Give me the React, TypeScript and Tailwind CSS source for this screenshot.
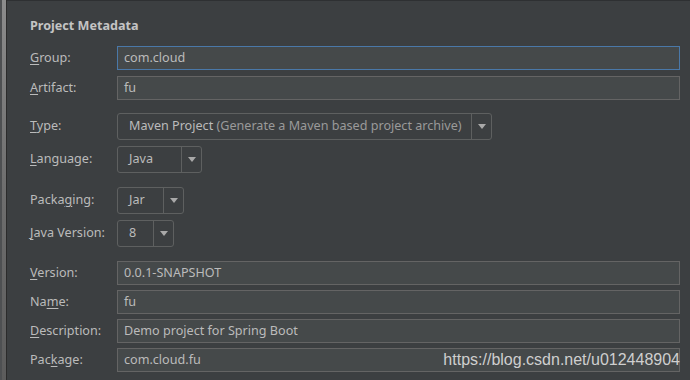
import React from "react";

const Arrow = () => (
  <svg width="8" height="5" viewBox="0 0 8 5">
    <path d="M0 0 L8 0 L4 5 Z" fill="#a9a9a9" />
  </svg>
);

function Label({ pre, m, post }: { pre: string; m: string; post: string }) {
  return (
    <div className="w-[87px] shrink-0 text-[#bbbbbb]">
      {pre}
      <span className="underline underline-offset-[2px] decoration-[1px]">{m}</span>
      {post}
    </div>
  );
}

function TextRow({
  label,
  value,
  focused,
  mt,
}: {
  label: [string, string, string];
  value: string;
  focused?: boolean;
  mt: string;
}) {
  return (
    <div className={`flex items-center ${mt}`}>
      <Label pre={label[0]} m={label[1]} post={label[2]} />
      <div
        className={`w-[563px] h-[24px] flex items-center pl-[6px] bg-[#45494a] border text-[#bbbbbb] ${
          focused ? "border-[#4a78a8]" : "border-[#646464]"
        }`}
      >
        {value}
      </div>
    </div>
  );
}

function ComboRow({
  label,
  children,
  width,
  mt,
}: {
  label: [string, string, string];
  children: React.ReactNode;
  width: string;
  mt: string;
}) {
  return (
    <div className={`flex items-center ${mt}`}>
      <Label pre={label[0]} m={label[1]} post={label[2]} />
      <div className={`${width} h-[27px] flex rounded-[3px] border border-[#5e6060] bg-[#3c3f41]`}>
        <div className="flex-1 flex items-center pl-[11px] text-[#bbbbbb] whitespace-nowrap overflow-hidden">
          {children}
        </div>
        <div className="w-[20px] border-l border-[#5e6060] flex items-center justify-center">
          <Arrow />
        </div>
      </div>
    </div>
  );
}

export default function App() {
  return (
    <div
      className="w-[690px] h-[380px] bg-[#3c3f41] flex overflow-hidden relative text-[12.6px]"
      style={{ fontFamily: '"Noto Sans", "Open Sans", sans-serif' }}
    >
      <div className="w-[7px] shrink-0 flex">
        <div className="w-[2px] bg-[#4e5052]" />
        <div className="w-[4px] bg-gradient-to-b from-[#8c8c8c] via-[#6e6e6e] to-[#5c5c5c]" />
        <div className="w-[1px] bg-[#2b2b2b]" />
      </div>
      <div className="flex-1 flex flex-col border-t border-[#2e3032] pl-[23px]">
        <div className="mt-[17px] h-[16px] leading-[16px] font-bold text-[#c4c4c4]">Project Metadata</div>
        <TextRow label={["", "G", "roup:"]} value="com.cloud" focused mt="mt-[12px]" />
        <TextRow label={["", "A", "rtifact:"]} value="fu" mt="mt-[6px]" />
        <ComboRow label={["", "T", "ype:"]} width="w-[375px]" mt="mt-[13px]">
          <span>Maven Project</span>
          <span className="text-[#9a9a9a]">&nbsp;(Generate a Maven based project archive)</span>
        </ComboRow>
        <ComboRow label={["", "L", "anguage:"]} width="w-[85px]" mt="mt-[6px]">
          Java
        </ComboRow>
        <ComboRow label={["Packa", "g", "ing:"]} width="w-[67px]" mt="mt-[14px]">
          Jar
        </ComboRow>
        <ComboRow label={["", "J", "ava Version:"]} width="w-[57px]" mt="mt-[6px]">
          8
        </ComboRow>
        <TextRow label={["", "V", "ersion:"]} value="0.0.1-SNAPSHOT" mt="mt-[14px]" />
        <TextRow label={["Na", "m", "e:"]} value="fu" mt="mt-[5px]" />
        <TextRow label={["", "D", "escription:"]} value="Demo project for Spring Boot" mt="mt-[5px]" />
        <TextRow label={["Pac", "k", "age:"]} value="com.cloud.fu" mt="mt-[5px]" />
      </div>
      <div
        className="absolute right-[10px] top-[351px] leading-[18px] text-[16px] text-[#cfcfcf]"
        style={{ fontFamily: '"Liberation Sans", Arial, sans-serif' }}
      >
        https://blog.csdn.net/u012448904
      </div>
    </div>
  );
}
